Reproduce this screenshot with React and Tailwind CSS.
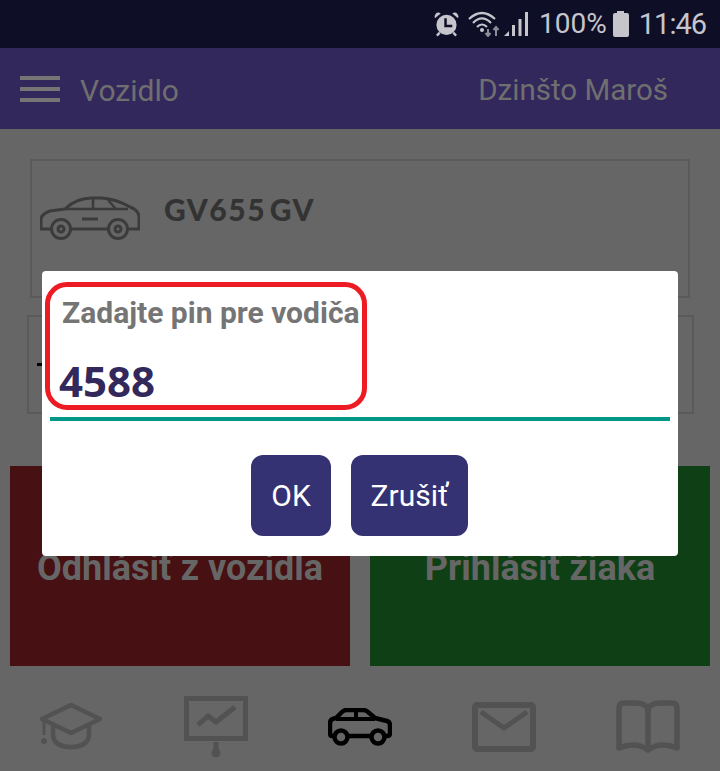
import React from 'react';

const AlarmIcon = () => (
  <svg width="25" height="28" viewBox="0 0 26 28" fill="#c6c5cc">
    <circle cx="13" cy="15" r="10.500" />
    <path d="M1 8 L7 3 Q4 1 2 3 Q0 5 1 8Z M25 8 L19 3 Q22 1 24 3 Q26 5 25 8Z" />
    <path d="M6 23 L3 26 M20 23 L23 26" stroke="#c6c5cc" strokeWidth="2.500" />
    <path d="M12 8 V16 H19" stroke="#0e0f27" strokeWidth="2.600" fill="none" />
  </svg>
);

const WifiIcon = () => (
  <svg width="32" height="26" viewBox="0 0 32 26" fill="none" stroke="#c6c5cc" strokeWidth="2.200">
    <path d="M1 8 Q14 -4 27 8" />
    <path d="M5 12 Q14 3 23 12" />
    <path d="M9 16 Q14 11 19 16" />
    <circle cx="14" cy="19" r="2" fill="#c6c5cc" stroke="none" />
    <path d="M20 25 V18 M17.500 22 L20 25 L22.500 22" stroke="#8d8c96" strokeWidth="2" />
    <path d="M28 25 V16 M25.500 19 L28 16 L30.500 19" stroke="#8d8c96" strokeWidth="2" />
  </svg>
);

const SignalIcon = () => (
  <svg width="24" height="26" viewBox="0 0 24 26" fill="#c6c5cc">
    <path d="M0 25 L5 20 V25Z" />
    <rect x="8" y="14" width="3" height="11" />
    <rect x="14.500" y="8" width="3" height="17" />
    <rect x="21" y="1" width="3" height="24" />
  </svg>
);

const BatteryIcon = () => (
  <svg width="16" height="26" viewBox="0 0 16 26" fill="#c6c5cc">
    <path d="M4 0 H11 V2 H14 Q16 2 16 4 V24 Q16 26 14 26 H2 Q0 26 0 24 V4 Q0 2 2 2 H4Z" />
  </svg>
);

const BigCar = () => (
  <svg width="100" height="44" viewBox="0 0 100 44" fill="none" stroke="#3b3b3b" strokeWidth="3" strokeLinejoin="round">
    <path d="M11 33 H1 V24 Q1 18 10 15 L25 13 Q36 2 52 2 H62 Q76 3 90 11 Q98 14 99 20 V33 H89" />
    <path d="M31 33 H68" />
    <path d="M25 13 H88 M53 3 V13 M68 4 L76 13" strokeWidth="2.500" />
    <path d="M42 23 H58" />
    <circle cx="21" cy="33" r="9.500" />
    <circle cx="78" cy="33" r="9.500" />
    <circle cx="21" cy="33" r="3" />
    <circle cx="78" cy="33" r="3" />
  </svg>
);

const GradCap = () => (
  <svg width="66" height="48" viewBox="0 0 66 48" fill="none" stroke="#525252" strokeWidth="4.500" strokeLinejoin="round">
    <path d="M33 2 L62 16 L33 30 L4 16 Z" />
    <path d="M15 22 V33 Q17 44 33 44 Q49 44 51 33 V22" />
    <path d="M6 17 V32" strokeWidth="3" />
    <circle cx="6" cy="38" r="3" fill="#525252" stroke="none" />
  </svg>
);

const Presentation = () => (
  <svg width="64" height="62" viewBox="0 0 64 62" fill="none" stroke="#525252" strokeWidth="5">
    <rect x="2.500" y="2.500" width="59" height="40" />
    <path d="M14 29 L24 20 L32 26 L51 11" />
    <path d="M32 46 V56" strokeWidth="5" />
    <circle cx="32" cy="57" r="4.500" fill="#525252" stroke="none" />
  </svg>
);

const NavCar = () => (
  <svg width="64" height="38" viewBox="0 0 64 38" fill="none" stroke="#000" strokeWidth="4.500" strokeLinejoin="round">
    <path d="M7 28 H4 Q2 28 2 25 V15 Q2 11 8 10 L14 4 Q16 2 19 2 H35 Q38 2 40 4 L47 10 L59 13 Q62 14 62 17 V25 Q62 28 59 28 H57" />
    <path d="M20 28 H43" />
    <path d="M8 11 H47 M28 2 V11" strokeWidth="4" />
    <circle cx="13" cy="29" r="6.500" />
    <circle cx="50" cy="29" r="6.500" />
  </svg>
);

const Mail = () => (
  <svg width="64" height="50" viewBox="0 0 64 50" fill="none" stroke="#525252" strokeWidth="6" strokeLinejoin="round">
    <rect x="3" y="3" width="58" height="44" rx="2" />
    <path d="M9 10 L32 26 L55 10" strokeWidth="5" strokeLinejoin="miter" />
  </svg>
);

const Book = () => (
  <svg width="64" height="54" viewBox="0 0 64 54" fill="none" stroke="#525252" strokeWidth="5.500" strokeLinejoin="round">
    <path d="M32 10 Q30 3 20 3 H8 Q3 3 3 8 V48 Q20 41 32 50 Q44 41 61 48 V8 Q61 3 56 3 H44 Q34 3 32 10 Z" />
    <path d="M32 10 V50" />
  </svg>
);

export default function App() {
  return (
    <div className="relative flex flex-col w-[720px] h-[771px] overflow-hidden bg-[#666666] font-['Roboto',sans-serif]">
      {/* Status bar */}
      <div className="flex items-center justify-end h-12 shrink-0 bg-[#0e0f27] pr-[14px] text-[#c6c5cc]">
        <AlarmIcon />
        <div className="ml-[9px]"><WifiIcon /></div>
        <div className="ml-[4px]"><SignalIcon /></div>
        <span className="ml-[11px] text-[28px] leading-none">100%</span>
        <div className="ml-[6px]"><BatteryIcon /></div>
        <span className="ml-[10px] text-[29px] leading-none tracking-[-1px]">11:46</span>
      </div>

      {/* Header */}
      <div className="flex items-center justify-between h-[81px] shrink-0 bg-[#33285c] pl-5 pr-[52px] text-[#6f6f6f]">
        <div className="flex items-center">
          <div className="flex flex-col gap-[7px] w-10">
            <div className="h-[4px] bg-[#757575]" />
            <div className="h-[4px] bg-[#757575]" />
            <div className="h-[4px] bg-[#757575]" />
          </div>
          <span className="ml-5 pt-[3px] text-[30px]">Vozidlo</span>
        </div>
        <span className="pt-[3px] text-[29.5px]">Dzinšto Maroš</span>
      </div>

      {/* Body */}
      <div className="flex flex-col flex-1 bg-[#666666]">
        <div className="flex items-start mt-[30px] mx-[30px] h-[139px] border-2 border-[#5a5a5a] pl-2 pt-[35px]">
          <BigCar />
          <span className="ml-6 mt-[-9px] text-[30px] font-black tracking-[1.500px] [word-spacing:-5px] text-[#333333] font-['Lato',sans-serif]">GV655 GV</span>
        </div>
        <div className="flex items-center mt-[17px] ml-[27px] mr-[26px] h-[99px] border-2 border-[#5a5a5a] pl-2">
          <div className="w-[5px] h-[3px] bg-black" />
        </div>
        <div className="flex gap-5 mt-[52px] mx-[10px] h-[200px]">
          <div className="flex flex-1 items-center justify-center bg-[#471012] pt-[4px] text-[36px] font-bold text-[#666666]">Odhlásiť z vozidla</div>
          <div className="flex flex-1 items-center justify-center bg-[#0f4015] pt-[4px] text-[36px] font-bold text-[#666666]">Prihlásiť žiaka</div>
        </div>
        {/* Bottom nav */}
        <div className="flex items-center justify-between flex-1 pl-[38px] pr-[40px] pt-[17px]">
          <GradCap />
          <Presentation />
          <NavCar />
          <Mail />
          <Book />
        </div>
      </div>

      {/* PIN dialog */}
      <div className="absolute left-[42px] top-[271px] flex flex-col w-[636px] h-[285px] rounded-[4px] bg-white px-2">
        <div className="ml-3 mt-[24px] text-[30px] leading-[36px] font-bold text-[#757575] whitespace-nowrap">Zadajte pin pre vodiča</div>
        <div className="ml-[9px] mt-[22px] text-[42px] leading-[56px] font-bold text-[#33285c] font-['Open_Sans',sans-serif]">4588</div>
        <div className="h-[4px] mt-2 bg-[#009688]" />
        <div className="flex justify-center gap-5 mt-[34px] pr-px">
          <button className="w-20 h-[81px] rounded-xl bg-[#353274] text-[30px] text-white">OK</button>
          <button className="w-[117px] h-[81px] rounded-xl bg-[#353274] text-[30px] text-white">Zrušiť</button>
        </div>
        {/* Red annotation drawn over the screenshot */}
        <div className="absolute left-[3px] top-[11px] w-[322px] h-[128px] rounded-[22px] border-[5px] border-[#ed1c24]" />
      </div>
    </div>
  );
}
